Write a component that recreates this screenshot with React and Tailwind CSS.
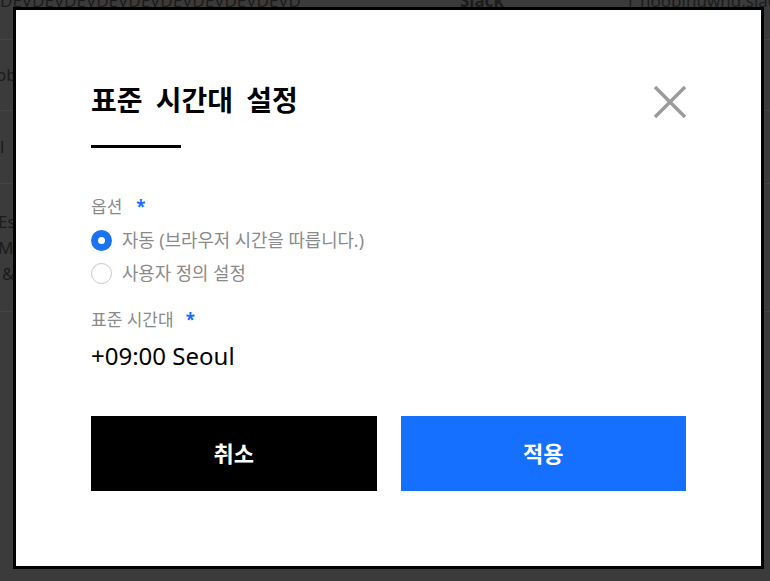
import { useState } from 'react';

const font = { fontFamily: '"Noto Sans", "Noto Sans CJK KR", sans-serif' };

function Backdrop() {
  return (
    <div className="absolute inset-0 bg-[#3b3b3b] text-[#1c1c1c] text-[17px] overflow-hidden">
      <div className="h-[52px] -mt-[12px] border-b border-[#454545] flex items-start">
        <span className="w-[460px] shrink-0">DEVDEVDEVDEVDEVDEVDEVDEVDEVD</span>
        <span className="w-[165px] shrink-0 font-bold">Slack</span>
        <span className="w-[15px] shrink-0">1</span>
        <span className="shrink-0">hoopinuwnd.slack.com</span>
      </div>
      <div className="h-[71px] border-b border-[#454545] flex items-center -ml-[4px]">ob</div>
      <div className="h-[73px] border-b border-[#454545] flex items-center">l</div>
      <div className="h-[128px] border-b border-[#454545] flex flex-col justify-center leading-[26px] -ml-[2px]">
        <span>Es</span>
        <span>M1</span>
        <span className="pl-[4px]">&amp;</span>
      </div>
    </div>
  );
}

function Radio({ checked, label, onClick }) {
  return (
    <label className="flex items-center gap-[10px] cursor-pointer" onClick={onClick}>
      {checked ? (
        <span className="w-[21px] h-[21px] rounded-full bg-[#1a73f0] flex items-center justify-center">
          <span className="w-[7px] h-[7px] rounded-full bg-white" />
        </span>
      ) : (
        <span className="w-[21px] h-[21px] rounded-full border border-[#c8c8c8] bg-white" />
      )}
      <span className="text-[17.8px] leading-[24px] text-[#8a8a8a]">{label}</span>
    </label>
  );
}

export default function App() {
  const [mode, setMode] = useState('auto');

  return (
    <div className="relative w-[770px] h-[581px] overflow-hidden" style={font}>
      <Backdrop />
      <div className="absolute left-[13px] top-[7px] w-[751px] h-[562px] bg-white border-[3px] border-black px-[75px] pt-[72px]">
        <div className="flex justify-between items-start">
          <h1 className="text-[28px] leading-[36px] font-bold text-black [word-spacing:6px]">표준 시간대 설정</h1>
          <button className="mt-[3px] -mr-[1px] w-[34px] h-[34px]">
            <svg viewBox="0 0 34 34" width="34" height="34">
              <path d="M2 2 L32 32 M32 2 L2 32" stroke="#9a9a9a" strokeWidth="3.4" fill="none" />
            </svg>
          </button>
        </div>
        <div className="mt-[26px] w-[90px] h-[3px] bg-black" />

        <div className="mt-[48px] text-[17px] leading-[22px] text-[#8a8a8a] flex gap-[14px]">
          <span>옵션</span>
          <span className="text-[#1a6cff] font-bold">*</span>
        </div>
        <div className="mt-[10px] flex flex-col gap-[9px]">
          <Radio checked={mode === 'auto'} label="자동 (브라우저 시간을 따릅니다.)" onClick={() => setMode('auto')} />
          <Radio checked={mode === 'custom'} label="사용자 정의 설정" onClick={() => setMode('custom')} />
        </div>

        <div className="mt-[24px] text-[17px] leading-[22px] text-[#8a8a8a] flex gap-[12px]">
          <span>표준 시간대</span>
          <span className="text-[#1a6cff] font-bold">*</span>
        </div>
        <div className="mt-[10px] text-[24px] leading-[30px] text-black">+09:00 Seoul</div>

        <div className="mt-[45px] grid grid-cols-2 gap-[24px]">
          <button className="h-[75px] bg-black text-white text-[22px] font-bold">취소</button>
          <button className="h-[75px] bg-[#1570ff] text-white text-[22px] font-bold">적용</button>
        </div>
      </div>
    </div>
  );
}
